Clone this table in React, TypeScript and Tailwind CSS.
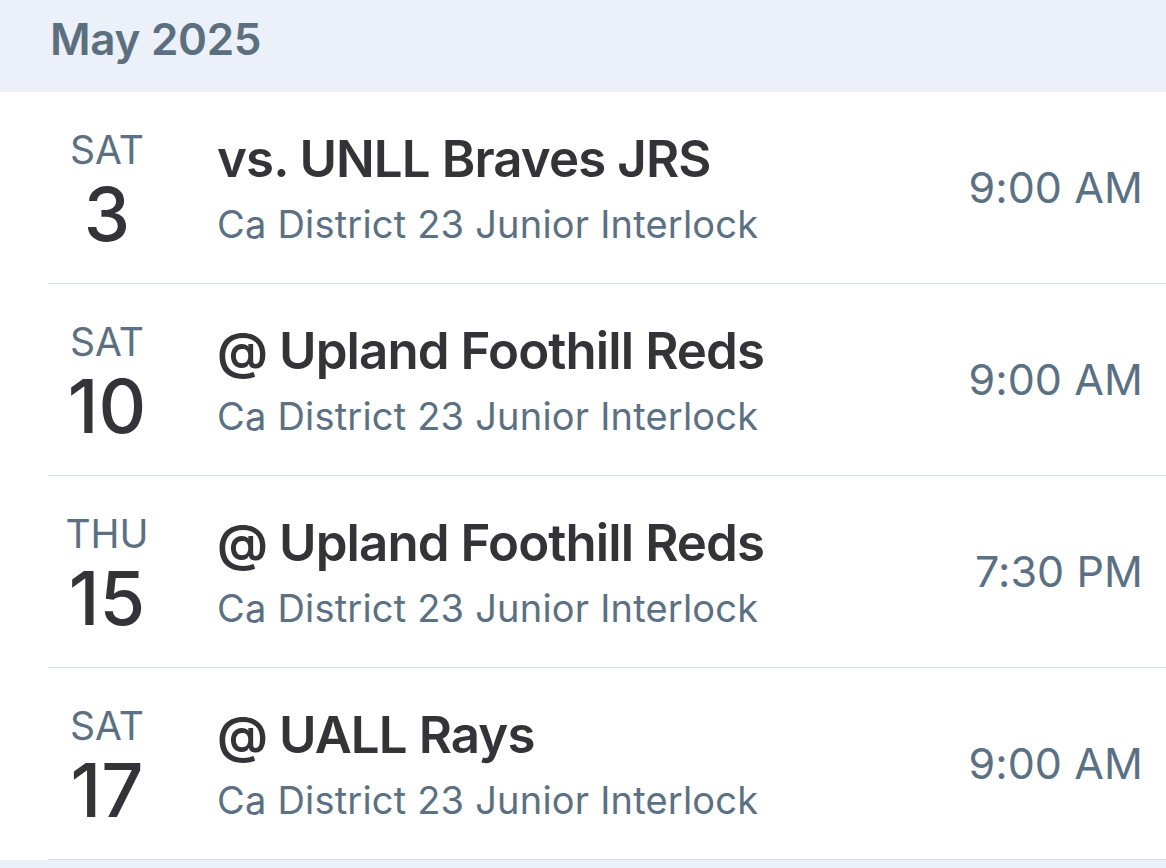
import React from "react";

const games = [
  { dow: "SAT", day: "3", title: "vs. UNLL Braves JRS", time: "9:00 AM" },
  { dow: "SAT", day: "10", title: "@ Upland Foothill Reds", time: "9:00 AM" },
  { dow: "THU", day: "15", title: "@ Upland Foothill Reds", time: "7:30 PM" },
  { dow: "SAT", day: "17", title: "@ UALL Rays", time: "9:00 AM" },
];

export default function App() {
  return (
    <div
      className="w-[1166px] h-[868px] overflow-hidden bg-white"
      style={{ fontFamily: "Inter, 'Noto Sans', sans-serif" }}
    >
      <div className="h-[92px] bg-[#ebf0f9] pl-[50px] pt-[17px]">
        <span className="text-[44px] leading-[44px] font-semibold text-[#5b6f7f] tracking-[-0.3px]">May 2025</span>
      </div>
      <div className="pl-[48px]">
        {games.map((g, i) => (
          <div key={i} className="h-[192px] border-b border-[#d6dce2] flex items-start pr-[23px]">
            <div className="w-[118px] flex flex-col items-center pt-[38px]">
              <span className="text-[39px] leading-[39px] text-[#5b7082]">{g.dow}</span>
              <span className="mt-[8px] text-[74px] leading-[74px] font-medium text-[#333338]">{g.day}</span>
            </div>
            <div className="ml-[51px] flex flex-col pt-[41px]">
              <span className="text-[51px] leading-[52px] font-semibold text-[#333338] tracking-[-0.9px]">{g.title}</span>
              <span className="mt-[20px] text-[38px] leading-[39px] text-[#5b7082] tracking-[0.2px]">Ca District 23 Junior Interlock</span>
            </div>
            <div className="ml-auto self-center text-[43px] leading-none text-[#5b7082] tracking-[0.1px]">{g.time}</div>
          </div>
        ))}
      </div>
      <div className="h-[20px] bg-[#ebf0f9]" />
    </div>
  );
}
